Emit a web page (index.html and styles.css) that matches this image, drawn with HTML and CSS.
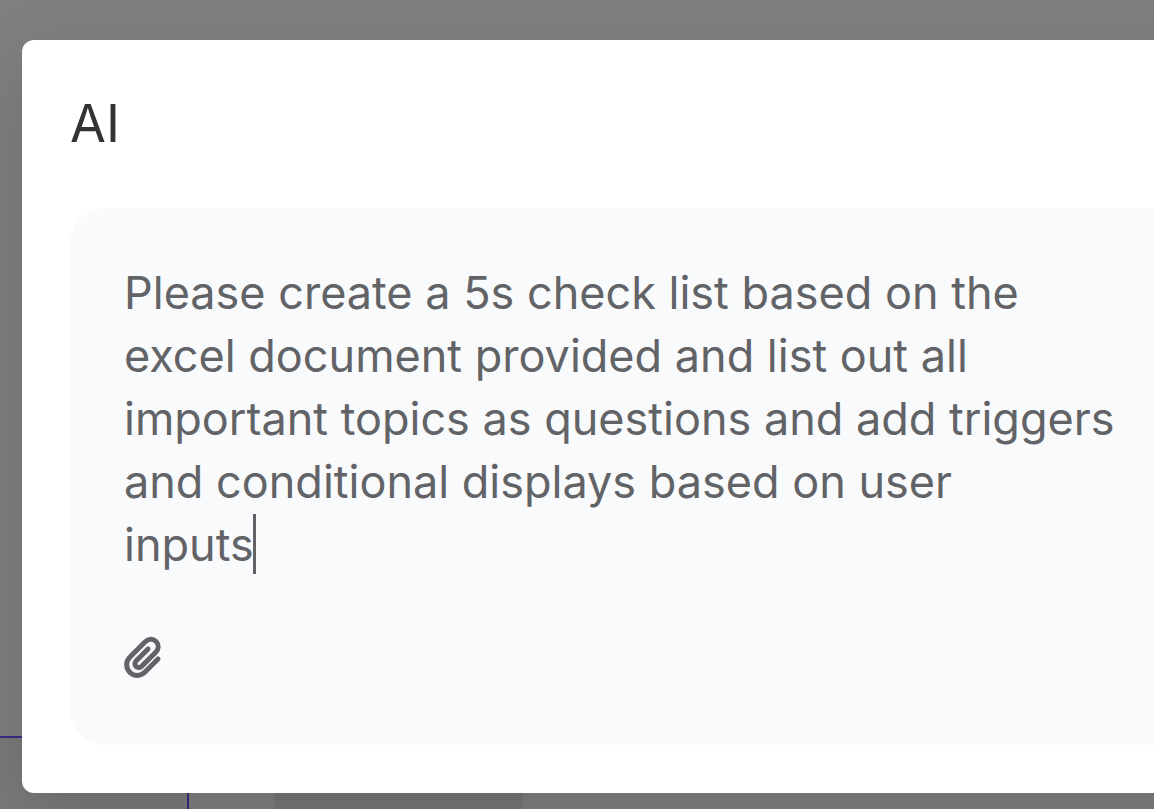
FILE: index.html
```html
<!DOCTYPE html>
<html lang="en">

<head>
    <meta charset="UTF-8">
    <meta name="viewport" content="width=device-width, initial-scale=1">
    <title>AI</title>
    <link rel="stylesheet" href="styles.css">
</head>

<body>
<div class="page">
    <div class="canvas">
        <div class="panel"></div>
        <div class="block"></div>
    </div>
    <div class="overlay">
        <div class="modal" role="dialog" aria-labelledby="title">
            <h1 class="title" id="title">AI</h1>
            <form class="prompt" action="">
                <div class="field">
                    <textarea class="text" id="prompt" rows="5" aria-labelledby="title" spellcheck="false">Please create a 5s check list based on the
excel document provided and list out all
important topics as questions and add triggers
and conditional displays based on user
inputs</textarea>
                    <span class="caret"></span>
                </div>
                <button class="attach" type="button" aria-label="Attach file">
                    <svg width="38" height="44" viewBox="0 0 38 44" fill="none" stroke="currentColor" stroke-width="5" stroke-linecap="round" stroke-linejoin="round">
                        <path d="M34 23L21 36C16.500 40.500 10 40.500 6 36.500C1.500 32 1.500 25.500 6 21L21 6C24.500 2.500 29 2.500 32 5.500C35 8.500 35 13 31.500 16.500L18 30C16 32 13.500 32 12 30.500C10.500 29 10.500 26.500 12.500 24.500L24 13"/>
                    </svg>
                </button>
            </form>
        </div>
    </div>
</div>
</body>

</html>
```
FILE: styles.css
```css
body {
    margin: 0;
    font-family: Inter, "Open Sans", sans-serif;
}

.page {
    position: relative;
    min-height: 100vh;
    overflow: hidden;
    background: #fff;
}

/* content behind the dialog */
.canvas {
    position: absolute;
    inset: 0;
}

.panel {
    position: absolute;
    left: -2px;
    top: 736px;
    width: 187px;
    height: 120px;
    border: 2px solid #6a5cff;
    background: #f5f5f5;
}

.block {
    position: absolute;
    left: 274px;
    top: 740px;
    width: 249px;
    height: 120px;
    background: #ededed;
}

.overlay {
    position: relative;
    box-sizing: border-box;
    min-height: 100vh;
    padding: 40px 0 16px 22px;
    background: rgba(0, 0, 0, .5);
}

.modal {
    box-sizing: border-box;
    width: calc(100% + 100px);
    padding: 48px;
    border-radius: 12px;
    background: #fff;
    box-shadow: 0 24px 72px rgba(0, 0, 0, .14);
}

.title {
    margin: 0 0 48px;
    color: #323335;
    font-size: 52px;
    font-weight: 400;
    line-height: 72px;
}

.prompt {
    padding: 53px 54px 65px;
    border-radius: 36px;
    background: #f9fafc;
    color: #626366;
}

.field {
    position: relative;
}

.text {
    display: block;
    box-sizing: border-box;
    width: 100%;
    border: 0;
    padding: 0;
    outline: 0;
    resize: none;
    overflow: hidden;
    background: none;
    color: inherit;
    font-family: inherit;
    font-size: 45px;
    line-height: 63px;
    white-space: pre;
}

.caret {
    position: absolute;
    left: 129px;
    bottom: 2px;
    width: 3px;
    height: 60px;
    background: #626366;
}

.attach {
    display: block;
    margin-top: 60px;
    border: 0;
    padding: 0;
    background: none;
    color: #626366;
    cursor: pointer;
}

.attach svg {
    display: block;
}
```
